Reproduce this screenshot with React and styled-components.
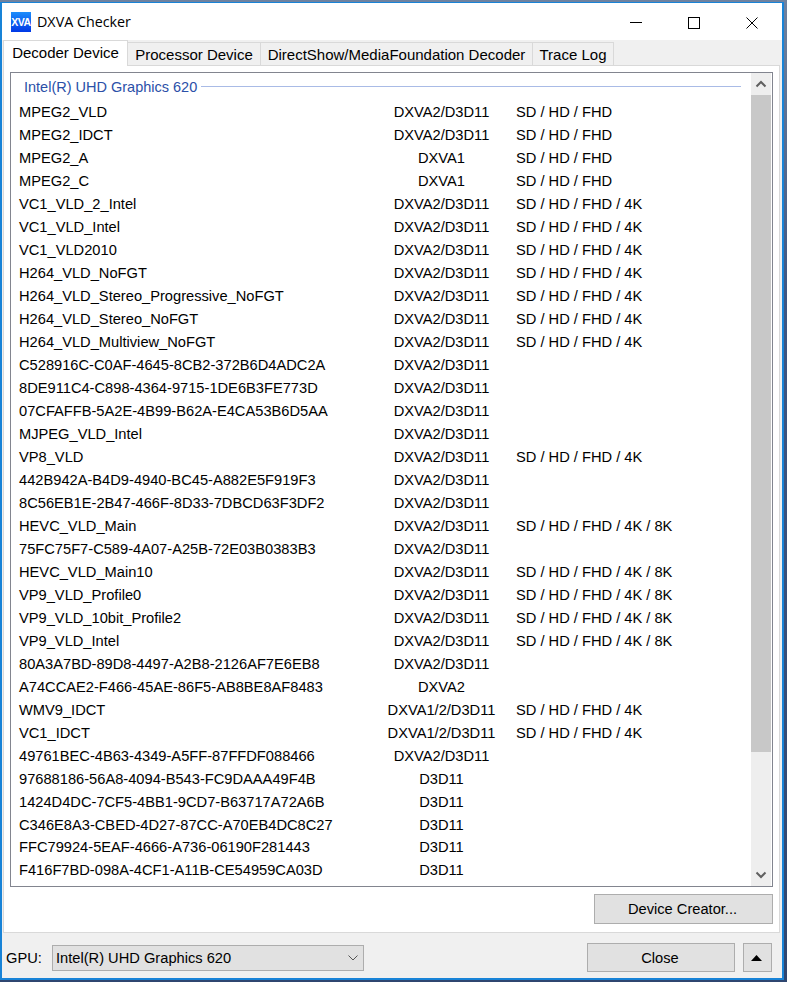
import React from "react";
import styled, { createGlobalStyle } from "styled-components";

const GlobalStyle = createGlobalStyle`
  html, body {
    margin: 0;
    padding: 0;
    height: 982px;
    overflow: hidden;
    background: #4a6288;
  }
  * {
    box-sizing: border-box;
  }
`;

const Desktop = styled.div`
  width: 787px;
  height: 982px;
  padding: 2px 3px 2px 0;
  background: linear-gradient(#6f829f 0, #3d5683 30%, #2f4670 100%);
`;
const Window = styled.div`
  height: 978px;
  display: flex;
  flex-direction: column;
  border: solid #1883d7;
  border-width: 1px 2px 2px 2px;
  background: #f0f0f0;
  font-family: "Liberation Sans", Arial, sans-serif;
  color: #000;
`;
const TitleBar = styled.div`
  height: 37px;
  flex: none;
  display: flex;
  align-items: center;
  background: #fff;
  padding-left: 9px;
`;
const AppIcon = styled.div`
  width: 20px;
  height: 20px;
  margin-top: 1px;
  display: flex;
  align-items: center;
  justify-content: center;
  background: linear-gradient(#1c8dfb, #0038e6);
  color: #fff;
  font-size: 10.5px;
  font-weight: 700;
  letter-spacing: -0.4px;
`;
const TitleText = styled.span`
  margin-left: 6px;
  margin-bottom: 1px;
  font-family: "Open Sans", sans-serif;
  font-size: 14.3px;
`;
const Controls = styled.div`
  margin-left: auto;
  display: flex;
  padding-right: 24px;
  gap: 46px;
  margin-top: 3px;
`;
const TabStrip = styled.div`
  height: 25px;
  flex: none;
  display: flex;
  align-items: flex-end;
  padding-left: 1px;
`;
const Tab = styled.div`
  width: ${(p) => p.$w}px;
  height: ${(p) => (p.$active ? 26 : 23)}px;
  display: flex;
  align-items: center;
  justify-content: center;
  padding-bottom: ${(p) => (p.$active ? 3 : 0)}px;
  font-size: 15px;
  background: ${(p) => (p.$active ? "#fff" : "#f0f0f0")};
  border: solid #d9d9d9;
  border-width: 1px 1px 0 ${(p) => (p.$active ? 1 : 0)}px;
  margin-bottom: ${(p) => (p.$active ? -1 : 0)}px;
  position: relative;
  white-space: nowrap;
`;
const Panel = styled.div`
  height: 868px;
  flex: none;
  margin: 0 2px 0 1px;
  padding: 6px 6px 0 6px;
  background: #fff;
  border: 1px solid #d9d9d9;
  display: flex;
  flex-direction: column;
`;
const ListBox = styled.div`
  height: 815px;
  flex: none;
  display: flex;
  border: 1px solid #82858f;
`;
const ListBody = styled.div`
  flex: 1;
  padding: 5px 0 0 8px;
  min-width: 0;
`;
const GroupHead = styled.div`
  height: 17px;
  display: flex;
  align-items: center;
  padding-left: 5px;
  padding-right: 10px;
  color: #2b50a8;
  font-size: 14.5px;
  margin-bottom: 6px;
`;
const GroupLine = styled.div`
  flex: 1;
  height: 1px;
  margin-left: 4px;
  background: #a9bbe6;
`;
const Row = styled.div`
  display: grid;
  grid-template-columns: 348px 149px 1fr;
  height: 22.97px;
  align-items: center;
  font-size: 14.67px;
  white-space: nowrap;
`;
const Api = styled.span`
  text-align: center;
`;
const ScrollBar = styled.div`
  width: 21px;
  flex: none;
  display: flex;
  flex-direction: column;
  background: #eeeeee;
  border-right: 1px solid #fff;
`;
const ScrollButton = styled.div`
  height: 22px;
  flex: none;
  display: flex;
  align-items: center;
  justify-content: center;
`;
const ScrollThumb = styled.div`
  height: 657px;
  flex: none;
  background: #c8c8c8;
`;
const ScrollSpace = styled.div`
  flex: 1;
`;
const ActionRow = styled.div`
  display: flex;
  justify-content: flex-end;
  padding-top: 7px;
`;
const Button = styled.div`
  width: ${(p) => p.$w}px;
  height: ${(p) => p.$h}px;
  flex: none;
  display: flex;
  align-items: center;
  justify-content: center;
  padding-right: 2px;
  background: #e1e1e1;
  border: 1px solid #adadad;
  font-size: 14.67px;
  white-space: nowrap;
`;
const Footer = styled.div`
  flex: 1;
  display: flex;
  align-items: center;
  padding: 4px 10px 0 4px;
`;
const GpuLabel = styled.span`
  font-size: 14.67px;
  width: 46px;
  flex: none;
`;
const Combo = styled.div`
  width: 312px;
  height: 26px;
  flex: none;
  display: flex;
  align-items: center;
  justify-content: space-between;
  padding: 0 5px 0 3px;
  background: #e1e1e1;
  border: 1px solid #adadad;
  font-size: 14.67px;
`;
const FooterButtons = styled.div`
  margin-left: auto;
  display: flex;
  gap: 8px;
`;

const SD = "SD / HD / FHD";
const SD4 = "SD / HD / FHD / 4K";
const SD8 = "SD / HD / FHD / 4K / 8K";
const D = "DXVA2/D3D11";

const rows = [
  ["MPEG2_VLD", D, SD],
  ["MPEG2_IDCT", D, SD],
  ["MPEG2_A", "DXVA1", SD],
  ["MPEG2_C", "DXVA1", SD],
  ["VC1_VLD_2_Intel", D, SD4],
  ["VC1_VLD_Intel", D, SD4],
  ["VC1_VLD2010", D, SD4],
  ["H264_VLD_NoFGT", D, SD4],
  ["H264_VLD_Stereo_Progressive_NoFGT", D, SD4],
  ["H264_VLD_Stereo_NoFGT", D, SD4],
  ["H264_VLD_Multiview_NoFGT", D, SD4],
  ["C528916C-C0AF-4645-8CB2-372B6D4ADC2A", D, ""],
  ["8DE911C4-C898-4364-9715-1DE6B3FE773D", D, ""],
  ["07CFAFFB-5A2E-4B99-B62A-E4CA53B6D5AA", D, ""],
  ["MJPEG_VLD_Intel", D, ""],
  ["VP8_VLD", D, SD4],
  ["442B942A-B4D9-4940-BC45-A882E5F919F3", D, ""],
  ["8C56EB1E-2B47-466F-8D33-7DBCD63F3DF2", D, ""],
  ["HEVC_VLD_Main", D, SD8],
  ["75FC75F7-C589-4A07-A25B-72E03B0383B3", D, ""],
  ["HEVC_VLD_Main10", D, SD8],
  ["VP9_VLD_Profile0", D, SD8],
  ["VP9_VLD_10bit_Profile2", D, SD8],
  ["VP9_VLD_Intel", D, SD8],
  ["80A3A7BD-89D8-4497-A2B8-2126AF7E6EB8", D, ""],
  ["A74CCAE2-F466-45AE-86F5-AB8BE8AF8483", "DXVA2", ""],
  ["WMV9_IDCT", "DXVA1/2/D3D11", SD4],
  ["VC1_IDCT", "DXVA1/2/D3D11", SD4],
  ["49761BEC-4B63-4349-A5FF-87FFDF088466", D, ""],
  ["97688186-56A8-4094-B543-FC9DAAA49F4B", "D3D11", ""],
  ["1424D4DC-7CF5-4BB1-9CD7-B63717A72A6B", "D3D11", ""],
  ["C346E8A3-CBED-4D27-87CC-A70EB4DC8C27", "D3D11", ""],
  ["FFC79924-5EAF-4666-A736-06190F281443", "D3D11", ""],
  ["F416F7BD-098A-4CF1-A11B-CE54959CA03D", "D3D11", ""],
];

const tabs = [
  ["Decoder Device", 125],
  ["Processor Device", 133],
  ["DirectShow/MediaFoundation Decoder", 272],
  ["Trace Log", 81],
];

const App = () => {
  return (
    <Desktop>
      <GlobalStyle />
      <Window>
        <TitleBar>
          <AppIcon>XVA</AppIcon>
          <TitleText>DXVA Checker</TitleText>
          <Controls>
            <svg width="12" height="12" viewBox="0 0 12 12">
              <path d="M0 5.500h12" stroke="#000" fill="none" />
            </svg>
            <svg width="12" height="12" viewBox="0 0 12 12">
              <rect x="0.5" y="0.5" width="11" height="11" stroke="#000" fill="none" />
            </svg>
            <svg width="12" height="12" viewBox="0 0 12 12">
              <path d="M0.500 0.500l11 11M11.500 0.500l-11 11" stroke="#000" fill="none" />
            </svg>
          </Controls>
        </TitleBar>
        <TabStrip>
          {tabs.map(([label, w], i) => (
            <Tab key={label} $w={w} $active={i === 0}>
              {label}
            </Tab>
          ))}
        </TabStrip>
        <Panel>
          <ListBox>
            <ListBody>
              <GroupHead>
                Intel(R) UHD Graphics 620
                <GroupLine />
              </GroupHead>
              {rows.map(([name, api, res]) => (
                <Row key={name}>
                  <span>{name}</span>
                  <Api>{api}</Api>
                  <span>{res}</span>
                </Row>
              ))}
            </ListBody>
            <ScrollBar>
              <ScrollButton>
                <svg width="12" height="8" viewBox="0 0 12 8">
                  <path d="M1.500 6.500L6 2l4.500 4.500" stroke="#606060" strokeWidth="2" fill="none" />
                </svg>
              </ScrollButton>
              <ScrollThumb />
              <ScrollSpace />
              <ScrollButton>
                <svg width="12" height="8" viewBox="0 0 12 8">
                  <path d="M1.500 1.500L6 6l4.500-4.500" stroke="#606060" strokeWidth="2" fill="none" />
                </svg>
              </ScrollButton>
            </ScrollBar>
          </ListBox>
          <ActionRow>
            <Button $w={179} $h={30}>Device Creator...</Button>
          </ActionRow>
        </Panel>
        <Footer>
          <GpuLabel>GPU:</GpuLabel>
          <Combo>
            Intel(R) UHD Graphics 620
            <svg width="10" height="6" viewBox="0 0 10 6">
              <path d="M0.500 0.500L5 5l4.500-4.500" stroke="#555" fill="none" />
            </svg>
          </Combo>
          <FooterButtons>
            <Button $w={148} $h={29}>Close</Button>
            <Button $w={29} $h={29}>
              <svg width="11" height="6" viewBox="0 0 11 6">
                <path d="M5.500 0L11 6H0z" fill="#000" />
              </svg>
            </Button>
          </FooterButtons>
        </Footer>
      </Window>
    </Desktop>
  );
};

export default App;
